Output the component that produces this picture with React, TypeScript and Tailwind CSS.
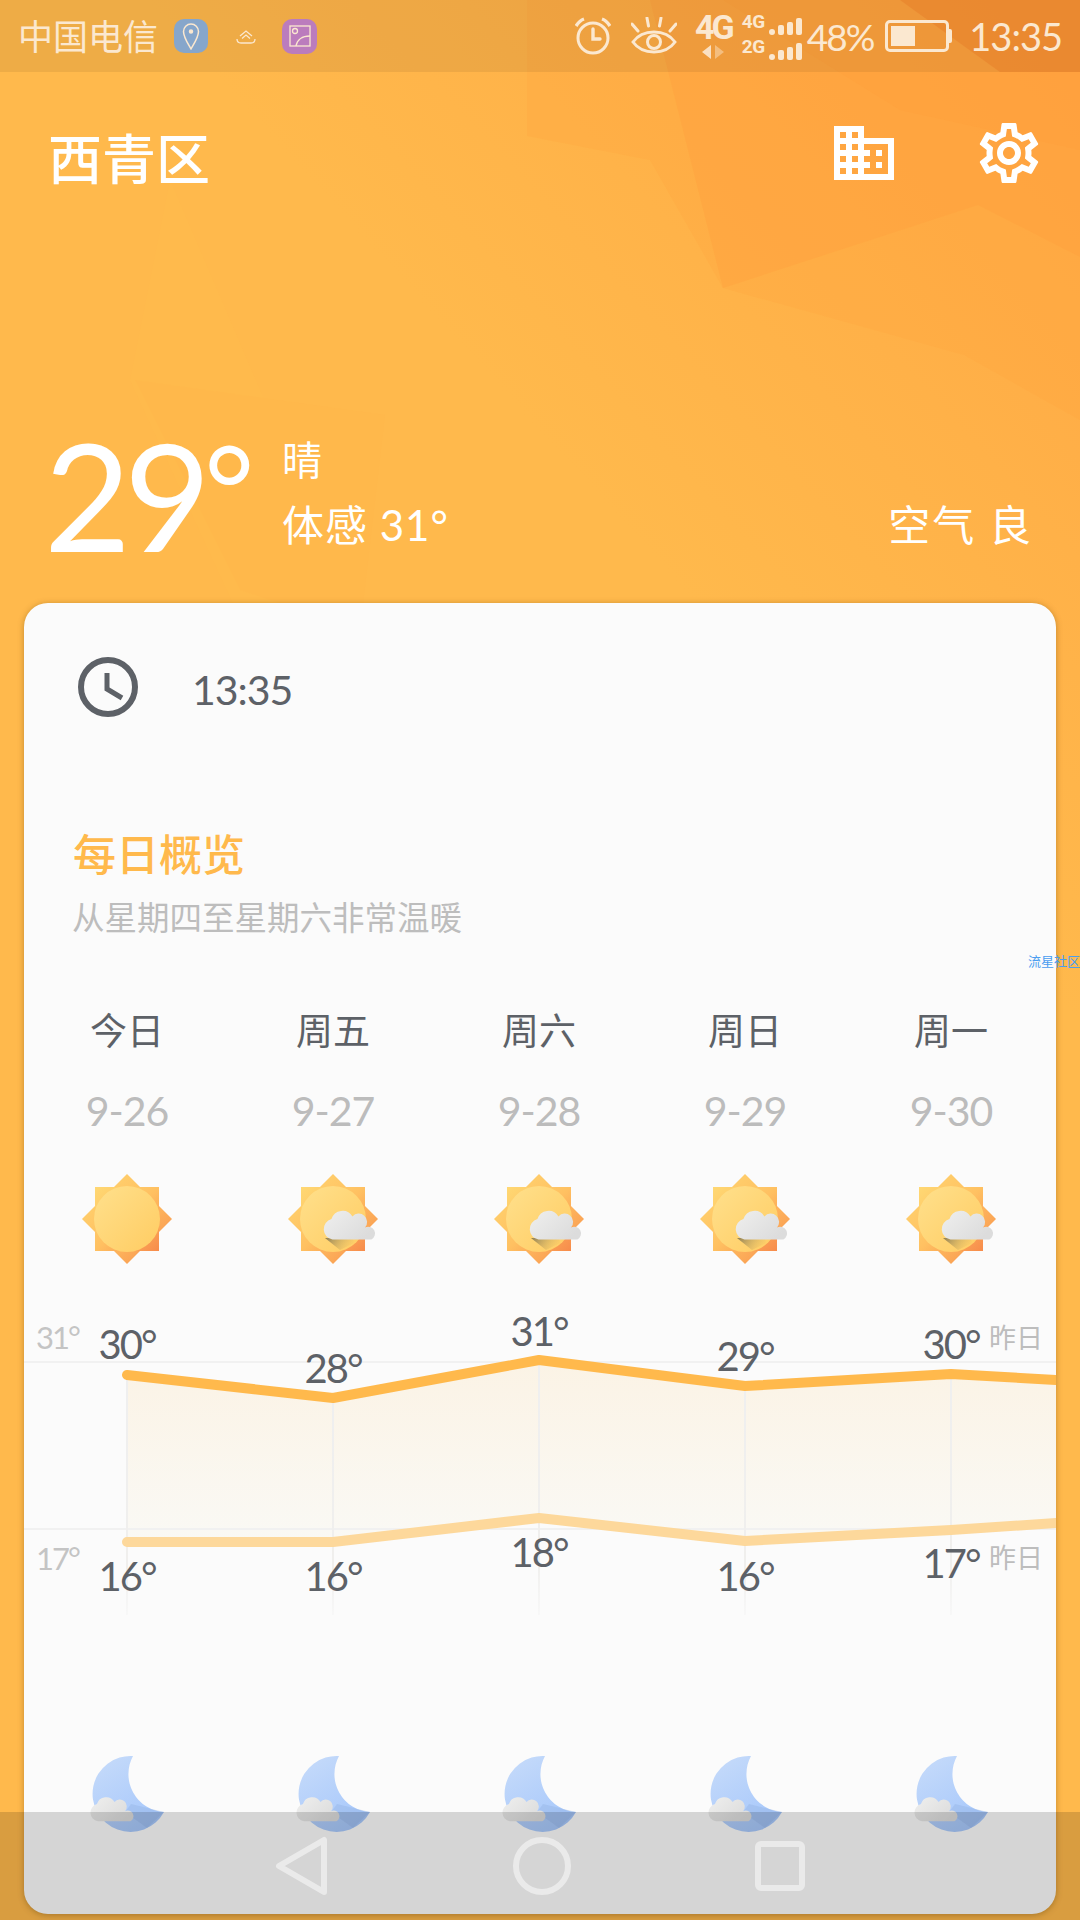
import { MdBusiness, MdOutlineSettings } from "react-icons/md";

const days = [
  { label: "今日", date: "9-26", clear: true },
  { label: "周五", date: "9-27", clear: false },
  { label: "周六", date: "9-28", clear: false },
  { label: "周日", date: "9-29", clear: false },
  { label: "周一", date: "9-30", clear: false },
];

const columns = [103, 309, 515, 721, 927];
const highs = [
  { y: 75, text: "30°", labelY: 45 },
  { y: 98, text: "28°", labelY: 69 },
  { y: 60, text: "31°", labelY: 32 },
  { y: 86, text: "29°", labelY: 57 },
  { y: 74, text: "30°", labelY: 45 },
];
const lows = [
  { y: 242, text: "16°", labelY: 277 },
  { y: 242, text: "16°", labelY: 277 },
  { y: 218, text: "18°", labelY: 253 },
  { y: 241, text: "16°", labelY: 277 },
  { y: 230, text: "17°", labelY: 264 },
];

function SharedGradients() {
  return (
    <svg className="absolute w-0 h-0">
      <defs>
        <linearGradient id="sunRays" x1="0" y1="0" x2="1" y2="1">
          <stop offset="0" stopColor="#ffd873" />
          <stop offset="0.5" stopColor="#ffc061" />
          <stop offset="1" stopColor="#f78b4b" />
        </linearGradient>
        <linearGradient id="sunCore" x1="0" y1="0" x2="1" y2="1">
          <stop offset="0" stopColor="#ffe08c" />
          <stop offset="1" stopColor="#ffcc62" />
        </linearGradient>
        <linearGradient id="cloudFill" x1="0" y1="0" x2="1" y2="0.6">
          <stop offset="0" stopColor="#efefee" />
          <stop offset="1" stopColor="#dcdcdc" />
        </linearGradient>
        <linearGradient id="cloudShade" x1="0" y1="0" x2="1" y2="0.3">
          <stop offset="0" stopColor="#8a7c55" />
          <stop offset="1" stopColor="#d9b45f" stopOpacity="0.1" />
        </linearGradient>
        <linearGradient id="moonFill" x1="0.1" y1="0" x2="0.7" y2="1">
          <stop offset="0" stopColor="#c6dbfa" />
          <stop offset="1" stopColor="#a6c7fb" />
        </linearGradient>
        <linearGradient id="bandFill" x1="0" y1="0" x2="0" y2="1">
          <stop offset="0" stopColor="#fbf3e5" />
          <stop offset="1" stopColor="#faf9f5" />
        </linearGradient>
        <linearGradient id="gridFade" x1="0" y1="0" x2="0" y2="1">
          <stop offset="0" stopColor="#efefef" />
          <stop offset="0.8" stopColor="#f0efed" />
          <stop offset="1" stopColor="#f2f2f2" stopOpacity="0.4" />
        </linearGradient>
      </defs>
    </svg>
  );
}

function Wallpaper() {
  return (
    <svg className="absolute inset-0" width="1080" height="1920" viewBox="0 0 1080 1920">
      <defs>
        <linearGradient id="wall" gradientUnits="userSpaceOnUse" x1="1080" y1="100" x2="620" y2="520">
          <stop offset="0" stopColor="#ffa844" />
          <stop offset="0.5" stopColor="#ffb148" />
          <stop offset="1" stopColor="#ffb94c" />
        </linearGradient>
      </defs>
      <rect width="1080" height="1920" fill="url(#wall)" />
      <polygon points="527,0 1080,0 1080,420 964,355 723,288 650,160 527,136" fill="#ffa540" opacity="0.3" />
      <polygon points="650,0 1080,0 1080,257 978,205 723,288" fill="#ff9d3c" opacity="0.35" />
      <polygon points="723,0 1080,0 1080,150 900,110" fill="#ff9a38" opacity="0.2" />
      <polygon points="900,0 1080,0 1080,72 1000,72" fill="#f98a2e" opacity="0.6" />
      <polygon points="130,380 170,180 350,600 250,640" fill="#ffc050" opacity="0.15" />
      <polygon points="135,380 385,415 360,630 240,590" fill="#ffb24a" opacity="0.2" />
    </svg>
  );
}

function CloudShape({ x, y, scale }: { x: number; y: number; scale: number }) {
  return (
    <path
      transform={`translate(${x} ${y}) scale(${scale})`}
      d="M47 31H10A10 10 0 0 1 9 11.5A11 11 0 0 1 29 9A7.5 7.5 0 0 1 41 19.5A6 6 0 0 1 47 31Z"
      fill="url(#cloudFill)"
    />
  );
}

function SunIcon({ clear }: { clear: boolean }) {
  return (
    <svg width="100" height="100" viewBox="-50 -50 100 100">
      <polygon points="0,-45 45,0 0,45 -45,0" fill="url(#sunRays)" />
      <rect x="-32" y="-32" width="64" height="64" fill="url(#sunRays)" />
      <circle cx="0" cy="0" r="33" fill="url(#sunCore)" />
      {!clear && (
        <>
          <polygon points="-8,19 20,19 21,24 7,31" fill="url(#cloudShade)" />
          <CloudShape x={-11} y={-12} scale={1.05} />
        </>
      )}
    </svg>
  );
}

function MoonIcon() {
  return (
    <svg width="100" height="100" viewBox="0 0 100 100">
      <path d="M54 10A38 38 0 1 0 85 66A38 38 0 0 1 54 10Z" fill="url(#moonFill)" />
      <polygon points="52,58 85,66 68,82 46,66" fill="#90aee0" opacity="0.35" />
      <CloudShape x={10} y={48} scale={0.88} />
    </svg>
  );
}

function StatusIcons() {
  return (
    <div className="flex items-center text-[#fbe8d0]">
      <svg width="36" height="38" viewBox="0 0 36 38" fill="none" stroke="currentColor" strokeWidth="3">
        <circle cx="18" cy="21" r="15" />
        <path d="M18 12v10h7" strokeLinecap="round" strokeWidth="3.4" />
        <path d="M1 9c2-3 5-6 8-7M35 9c-2-3-5-6-8-7" strokeWidth="3.4" />
      </svg>
      <svg className="ml-5" width="46" height="38" viewBox="0 0 46 38" fill="none" stroke="currentColor" strokeWidth="3">
        <path d="M2 25c5-7 13-10 21-10s16 3 21 10c-5 7-13 10-21 10S7 32 2 25Z" />
        <circle cx="23" cy="25" r="6.5" />
        <path d="M1 7l6 7M16 1l1.5 8M30 1l-1.5 8M45 7l-6 7" strokeLinecap="round" />
      </svg>
      <div className="ml-[18px] flex flex-col items-center w-[37px]">
        <span className="text-[34px] leading-[26px] font-bold tracking-[-3px] [font-family:Roboto,sans-serif]">4G</span>
        <svg className="mt-[5px]" width="24" height="14" viewBox="0 0 24 14" fill="currentColor">
          <path d="M10 0v14L1 7Z" opacity="0.9" />
          <path d="M14 0v14l9-7Z" opacity="0.45" />
        </svg>
      </div>
      <div className="ml-[10px] flex flex-col gap-[3px] w-[60px]">
        {["4G", "2G"].map((net) => (
          <div key={net} className="relative h-[22px]">
            <span className="absolute left-0 -top-[1px] text-[19px] leading-[20px] font-bold tracking-[-0.5px] [font-family:Roboto,sans-serif]">{net}</span>
            <div className="absolute right-0 bottom-0 flex items-end gap-[3px]">
              <span className="w-[6px] h-[6px] rounded-full bg-current" />
              <span className="w-[6px] h-[10px] rounded-[2px] bg-current" />
              <span className="w-[6px] h-[13px] rounded-[2px] bg-current" />
              <span className="w-[6px] h-[17px] rounded-[2px] bg-current" />
            </div>
          </div>
        ))}
      </div>
      <span className="ml-[5px] text-[37px] leading-none tracking-[-2px]">48%</span>
      <div className="ml-3 flex items-center">
        <div className="w-[64px] h-[32px] border-[3px] border-current rounded-[5px] p-[3px]">
          <div className="w-[24px] h-full bg-current" />
        </div>
        <div className="w-[3px] h-[14px] bg-current rounded-r-[2px]" />
      </div>
      <span className="ml-[17px] text-[38px] leading-none tracking-[-1px]">13:35</span>
    </div>
  );
}

function TrendChart() {
  const upper = columns.map((x, i) => `${x},${highs[i].y}`).concat("1032,80").join(" ");
  const lower = columns.map((x, i) => `${x},${lows[i].y}`).concat("1032,223").join(" ");
  const band = `${upper} 1032,223 ${columns.map((x, i) => `${x},${lows[i].y}`).reverse().join(" ")}`;
  return (
    <svg className="block" width="1032" height="340" viewBox="0 0 1032 340">
      <polygon points={band} fill="url(#bandFill)" />
      <line x1="0" y1="62" x2="1032" y2="62" stroke="#f1f1f1" strokeWidth="2" />
      <line x1="0" y1="229" x2="1032" y2="229" stroke="#f1f1f1" strokeWidth="2" />
      {columns.map((x, i) => (
        <rect key={x} x={x - 1} y={highs[i].y} width="2" height={315 - highs[i].y} fill="url(#gridFade)" />
      ))}
      <polyline points={lower} fill="none" stroke="#fdd89b" strokeWidth="10" strokeLinecap="round" strokeLinejoin="round" />
      <polyline points={upper} fill="none" stroke="#ffb94c" strokeWidth="10" strokeLinecap="round" strokeLinejoin="round" />
      <g fontSize="31" fill="#c4c4c4" letterSpacing="-2">
        <text x="12" y="49">31°</text>
        <text x="12" y="270">17°</text>
      </g>
      <g fontSize="27" fill="#bdbdbd">
        <text x="965" y="48">昨日</text>
        <text x="965" y="268">昨日</text>
      </g>
      <g fontSize="40" fill="#5d6167" textAnchor="middle" letterSpacing="-2">
        {columns.map((x, i) => (
          <text key={x} x={x} y={highs[i].labelY + 14}>{highs[i].text}</text>
        ))}
        {columns.map((x, i) => (
          <text key={x} x={x} y={lows[i].labelY + 14}>{lows[i].text}</text>
        ))}
      </g>
    </svg>
  );
}

export default function App() {
  return (
    <div className="relative w-[1080px] h-[1920px] overflow-hidden bg-[#ffb94c] [font-family:Lato,'Noto_Sans_CJK_SC',sans-serif]">
      <Wallpaper />
      <SharedGradients />

      <div className="relative flex flex-col">
        {/* Status bar */}
        <div className="h-[72px] bg-black/[0.065] pl-[18px] pr-[18px] flex items-center justify-between">
          <div className="flex items-center text-[#fbe8d0]">
            <span className="text-[35px] leading-none">中国电信</span>
            <div className="ml-[16px] w-[34px] h-[34px] rounded-[10px] bg-[#86a6cb] flex items-center justify-center">
              <svg width="18" height="28" viewBox="0 0 18 28" fill="none" stroke="currentColor" strokeWidth="1.5">
                <path d="M9 27C5 20 1.5 15 1.5 9.5a7.5 7.5 0 0 1 15 0C16.5 15 13 20 9 27Z" />
                <circle cx="9" cy="9.5" r="1.5" fill="currentColor" />
              </svg>
            </div>
            <svg className="ml-7" width="20" height="16" viewBox="0 0 20 16" fill="none" stroke="currentColor" strokeWidth="1.3">
              <path d="M4 8l6-5 6 5M6 10.5l4-3.5 4 3.5M1 11c0 2 1 4 4 4h10c3 0 4-2 4-4" />
            </svg>
            <div className="ml-[26px] w-[35px] h-[35px] rounded-[10px] bg-[#bb7cbd] flex items-center justify-center">
              <svg width="22" height="22" viewBox="0 0 22 22" fill="none" stroke="currentColor" strokeWidth="1.3">
                <rect x="1" y="1" width="20" height="20" />
                <circle cx="6" cy="6" r="2.5" />
                <path d="M7 21c1-6 6-10 14-10" />
              </svg>
            </div>
          </div>
          <StatusIcons />
        </div>

        {/* City header */}
        <div className="h-[176px] pl-[48px] pr-[35px] flex items-center justify-between text-white">
          <span className="text-[54px] font-medium leading-none">西青区</span>
          <div className="flex items-center gap-[73px] -mt-[14px]">
            <MdBusiness size={72} />
            <MdOutlineSettings size={72} />
          </div>
        </div>

        {/* Current conditions */}
        <div className="mt-[172px] h-[183px] pl-[44px] pr-[47px] flex items-start text-white">
          <span className="w-[238px] whitespace-nowrap text-[150px] leading-[150px] -mt-[8px] tracking-[-7px] [font-family:Lato,sans-serif]">
            29<span className="text-[122px] align-[18px]">°</span>
          </span>
          <div className="flex flex-col">
            <span className="text-[40px] leading-[48px] mt-[16px]">晴</span>
            <span className="text-[42px] leading-[50px] mt-[16px] tracking-[1px]">体感 31°</span>
          </div>
          <span className="ml-auto mt-[80px] text-[42px] leading-[50px] tracking-[2px]">空气 良</span>
        </div>

        {/* Forecast card */}
        <div className="relative mx-[24px] h-[1311px] rounded-[24px] bg-[#fbfbfb] shadow-[0_1px_6px_rgba(120,80,10,0.45)] overflow-hidden">
          <div className="ml-[54px] mt-[54px] flex items-center text-[#5d6167]">
            <svg width="60" height="60" viewBox="0 0 60 60" fill="none" stroke="currentColor" strokeWidth="6">
              <circle cx="30" cy="30" r="27" />
              <path d="M29 16v16l15 9" strokeWidth="5" />
            </svg>
            <span className="ml-[54px] mt-[4px] text-[41px] leading-none tracking-[-1px]">13:35</span>
          </div>

          <div className="ml-[49px] mt-[113px] text-[43px] font-medium leading-[50px] text-[#ffb94c]">每日概览</div>
          <div className="ml-[48px] mt-[18px] text-[32.5px] leading-[40px] text-[#bdbdbd]">从星期四至星期六非常温暖</div>

          <div className="mt-[71px] grid grid-cols-[repeat(5,206px)]">
            {days.map((d) => (
              <div key={d.date} className="flex flex-col items-center">
                <span className="text-[37px] leading-[44px] text-[#5d6167]">{d.label}</span>
                <span className="mt-[34px] text-[41px] leading-[48px] tracking-[-1px] text-[#bcbcbc]">{d.date}</span>
                <div className="mt-[34px]">
                  <SunIcon clear={d.clear} />
                </div>
              </div>
            ))}
          </div>

          <div className="mt-[31px]">
            <TrendChart />
          </div>

          <div className="mt-[106px] grid grid-cols-[repeat(5,206px)]">
            {days.map((d) => (
              <div key={d.date} className="flex justify-center pl-[3px]">
                <MoonIcon />
              </div>
            ))}
          </div>
        </div>
      </div>

      {/* Watermark over the card edge */}
      <div className="absolute right-0 top-[955px] text-[13px] leading-none text-[#4a9df0]">流星社区</div>

      {/* Navigation bar */}
      <div className="absolute left-0 right-0 bottom-0 h-[108px] bg-black/15 flex items-center justify-center gap-[182px] text-white/50">
        <svg width="56" height="60" viewBox="0 0 56 60" fill="none" stroke="currentColor" strokeWidth="6" strokeLinejoin="round">
          <path d="M50 4v52L5 30Z" />
        </svg>
        <svg width="60" height="60" viewBox="0 0 60 60" fill="none" stroke="currentColor" strokeWidth="6">
          <circle cx="30" cy="30" r="26" />
        </svg>
        <svg width="52" height="52" viewBox="0 0 52 52" fill="none" stroke="currentColor" strokeWidth="6" strokeLinejoin="round">
          <rect x="4" y="4" width="44" height="44" rx="3" />
        </svg>
      </div>
    </div>
  );
}
